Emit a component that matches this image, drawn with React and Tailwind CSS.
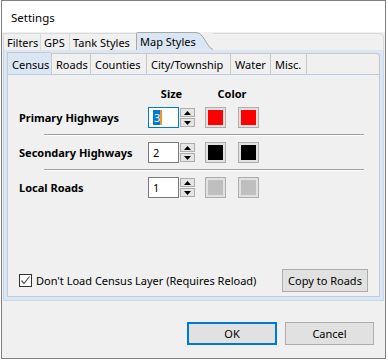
import React from 'react';

const Arrow = ({ down }) => (
  <svg width="7" height="4" viewBox="0 0 7 4">
    <path d={down ? 'M0 0H7L3.5 4Z' : 'M3.5 0L7 4H0Z'} fill="#000" />
  </svg>
);

const Spinner = ({ value, focused }) => (
  <div className="flex items-center h-[21px]">
    <div
      className={`w-[31px] h-[21px] bg-white border flex items-center pl-[4px] ${
        focused ? 'border-[#0078d7]' : 'border-[#7a7a7a]'
      }`}
    >
      {focused ? (
        <span className="bg-[#0078d7] text-white leading-[15px] pl-px border-r-2 border-[#f7931e]">
          {value}
        </span>
      ) : (
        <span>{value}</span>
      )}
    </div>
    <div className="flex flex-col gap-px ml-px w-[15px] h-[21px] py-px">
      <div className="h-[9px] border border-[#adadad] bg-[#e5e5e5] flex items-center justify-center">
        <Arrow />
      </div>
      <div className="h-[9px] border border-[#adadad] bg-[#e5e5e5] flex items-center justify-center">
        <Arrow down />
      </div>
    </div>
  </div>
);

const Swatch = ({ color }) => (
  <div className="w-[21px] h-[21px] border border-[#adadad] bg-[#e1e1e1] p-[2px]">
    <div className="w-full h-full" style={{ backgroundColor: color }} />
  </div>
);

const Row = ({ label, value, color, focused }) => (
  <div className="flex items-center h-[21px]">
    <div className="w-[129px] font-bold">{label}</div>
    <Spinner value={value} focused={focused} />
    <div className="ml-[10px] flex gap-[12px]">
      <Swatch color={color} />
      <Swatch color={color} />
    </div>
  </div>
);

const Separator = () => (
  <div className="ml-[25px] w-[320px] border-t border-[#a0a0a0] border-b border-b-white" />
);

const outerTabs = [
  ['Filters', 'w-[37px]'],
  ['GPS', 'w-[29px]'],
  ['Tank Styles', 'w-[67px]'],
];
const innerTabs = [
  ['Census', 'w-[44px]'],
  ['Roads', 'w-[39px]'],
  ['Counties', 'w-[56px]'],
  ['City/Township', 'w-[84px]'],
  ['Water', 'w-[40px]'],
  ['Misc.', 'w-[36px]'],
];

export default function App() {
  return (
    <div className="w-[388px] h-[360px] bg-white font-['Noto_Sans',sans-serif] text-[11px] text-black leading-none">
      <div className="ml-px w-[385px] h-[359px] border border-[#7f7f7f] flex flex-col">
        {/* title bar */}
        <div className="h-[31px] bg-white flex items-center pl-[9px] pt-[2px] text-[11.5px]">Settings</div>

        <div className="flex-1 bg-[#f0f0f0] flex flex-col">
          {/* outer tabs */}
          <div className="h-[18px] flex items-end pl-px">
            {outerTabs.map(([t, w]) => (
              <div
                key={t}
                className={`${w} h-[17px] pl-[3px] flex items-center border-l border-t border-[#d9d9d9]`}
              >
                {t}
              </div>
            ))}
            <div className="relative h-[18px] w-[77px] flex items-center pl-[4px]">
              <svg className="absolute inset-0" width="77" height="18" viewBox="0 0 77 18">
                <path
                  d="M0.5 18V1.5Q0.5 0.5 1.5 0.5H60Q64 0.5 67 5L72 13Q75 17.5 77 17.5"
                  fill="#dae6f3"
                  stroke="#a7a7a7"
                />
              </svg>
              <span className="relative">Map Styles</span>
            </div>
            <div className="flex-1 h-[17px] border-t border-r border-[#d9d9d9] rounded-tr-[5px] mr-px" />
          </div>

          {/* outer panel */}
          <div className="mx-px h-[251px] bg-[#dae6f3] border-x border-b border-[#c9d7e8] px-[3px] pt-[2px] flex flex-col">
            {/* inner tabs */}
            <div className="h-[22px] flex items-end">
              {innerTabs.map(([t, w], i) => (
                <div
                  key={t}
                  className={`${w} h-[21px] pl-[4px] flex items-center border-l border-t border-[#c9c9c9] ${
                    i === 0 ? 'bg-[#dae6f3] h-[22px] pt-px' : 'bg-[#f0f0f0]'
                  }`}
                >
                  {t}
                </div>
              ))}
              <div className="flex-1 h-[21px] bg-[#f0f0f0] border-l border-t border-r border-[#c9c9c9] rounded-tr-[4px]" />
            </div>

            {/* inner page */}
            <div className="flex-1 bg-[#f0f0f0] border border-[#bccde2] mb-[3px] flex flex-col pl-[11px]">
              <div className="mt-[10px] h-[16px] flex items-center font-bold">
                <div className="w-[129px]" />
                <div className="w-[47px] text-center">Size</div>
                <div className="ml-[10px] w-[54px] text-center">Color</div>
              </div>
              <div className="mt-[6px]">
                <Row label="Primary Highways" value="3" color="#ff0000" focused />
              </div>
              <div className="mt-[6px]">
                <Separator />
              </div>
              <div className="mt-[6px]">
                <Row label="Secondary Highways" value="2" color="#000000" />
              </div>
              <div className="mt-[6px]">
                <Separator />
              </div>
              <div className="mt-[6px]">
                <Row label="Local Roads" value="1" color="#bfbfbf" />
              </div>

              <div className="mt-auto mb-[4px] flex items-end pr-[11px]">
                <div className="flex items-center gap-[4px] mb-[5px]">
                  <div className="w-[13px] h-[13px] border border-[#333] bg-white flex items-center justify-center">
                    <svg width="11" height="11" viewBox="0 0 11 11">
                      <path d="M1.5 5.5L4 8.5L9.5 1.5" fill="none" stroke="#555" strokeWidth="1.2" />
                    </svg>
                  </div>
                  <span>Don't Load Census Layer (Requires Reload)</span>
                </div>
                <button className="ml-auto w-[86px] h-[23px] bg-[#e1e1e1] border border-[#adadad]">
                  Copy to Roads
                </button>
              </div>
            </div>
          </div>

          {/* footer buttons */}
          <div className="mt-[21px] flex justify-end gap-[8px] pr-[11px]">
            <button className="w-[90px] h-[23px] bg-[#e1e1e1] border-2 border-[#0078d7]">OK</button>
            <button className="w-[89px] h-[23px] bg-[#e1e1e1] border border-[#adadad]">Cancel</button>
          </div>
        </div>
      </div>
    </div>
  );
}
